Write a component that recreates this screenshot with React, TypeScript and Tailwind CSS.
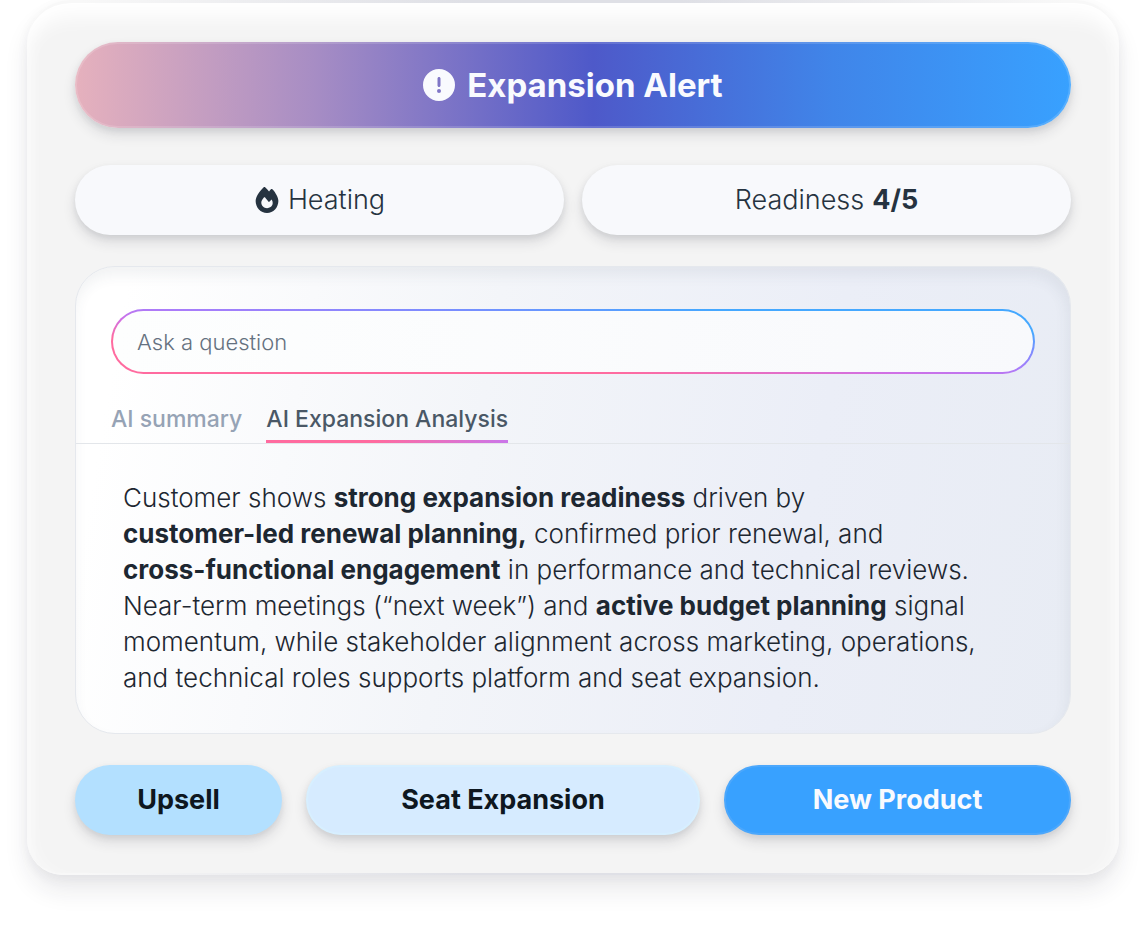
import { FaCircleExclamation, FaFire } from "react-icons/fa6";

const raised = "shadow-[0_7px_13px_rgba(30,35,50,0.12),0_3px_6px_rgba(30,35,50,0.08)]";

export default function App() {
  return (
    <main className="overflow-hidden bg-white px-[27px] pb-[54px] font-['Inter',sans-serif] text-[#263340]">
      <section className="rounded-b-[36px] rounded-t-[44px] border-b-2 border-t-[3px] border-transparent bg-[linear-gradient(#f4f4f4,#f4f4f4),linear-gradient(90deg,#f8f8f8_5%,#dfe0e6_40%,#dfe0e6_60%,#f8f8f8_95%)] px-12 pb-[38px] pt-[39px] shadow-[0_16px_24px_rgba(30,35,50,0.09),0_4px_12px_rgba(30,35,50,0.05),inset_0_18px_20px_-4px_#ffffff,inset_12px_0_18px_-8px_rgba(255,255,255,0.5),inset_-12px_0_18px_-8px_rgba(255,255,255,0.5)] [background-clip:padding-box,border-box] [background-origin:border-box]">
        <header
          className={`flex h-[86px] items-center justify-center gap-3 rounded-full border-2 border-white/15 bg-[linear-gradient(90deg,#e6b1bd_0%,#a78dc4_24%,#4e59c9_52%,#4085e9_76%,#38a1ff_100%)] bg-origin-border text-[#f9fafe] ${raised}`}
        >
          <FaCircleExclamation className="size-8" aria-hidden="true" />
          <h1 className="text-[33px] font-bold leading-10">Expansion Alert</h1>
        </header>

        <div className="mt-[37px] grid grid-cols-2 gap-[18px] text-[27px] leading-9">
          <div className={`flex h-[70px] items-center justify-center gap-2 rounded-full bg-[#f8f9fc] font-light ${raised}`}>
            <FaFire className="size-[26px]" aria-hidden="true" />
            <span>Heating</span>
          </div>
          <div className={`flex h-[70px] items-center justify-center gap-2 rounded-full bg-[#f8f9fc] font-light ${raised}`}>
            <span>Readiness</span>
            <strong className="font-bold">4/5</strong>
          </div>
        </div>

        <div className="mt-[31px] rounded-[40px] border border-[#e5e8ed] bg-[linear-gradient(100deg,#ffffff_5%,#f3f5f9_40%,#ebeef7_72%,#e8ecf4_100%)] pb-[37px] pt-[42px] shadow-[inset_-2px_8px_14px_rgba(50,65,85,0.07)]">
          <div className="px-[35px]">
            <input
              type="text"
              aria-label="Ask a question"
              placeholder="Ask a question"
              className="block h-[65px] w-full rounded-full border-2 border-transparent bg-[linear-gradient(90deg,#fdfefe,#f8f9fc),linear-gradient(4deg,#ff6b9f_28%,#cf70e6_43%,#a97cfa_53%,#7c8cff_67%,#45a8ff_82%)] px-6 text-[22px] font-light text-[#263340] outline-none [background-clip:padding-box,border-box] [background-origin:border-box] placeholder:text-[#657180] placeholder:opacity-100"
            />
          </div>

          <div role="tablist" className="mt-[26px] flex gap-6 border-b border-[#e3e6ea] px-[35px] text-[23px] font-medium leading-[38px]">
            <button type="button" role="tab" aria-selected="false" className="border-b-[3px] border-transparent pb-0.5 text-[#96a3b5]">
              AI summary
            </button>
            <button
              type="button"
              role="tab"
              aria-selected="true"
              className="border-b-[3px] pb-0.5 text-[#4a5866] [border-image:linear-gradient(90deg,#ff6b9f_45%,#ca76ea)_1]"
            >
              AI Expansion Analysis
            </button>
          </div>

          <p role="tabpanel" className="px-[47px] pt-9 text-[26px] font-light leading-9 text-[#1d2731] [&>strong]:font-bold">
            Customer shows <strong>strong expansion readiness</strong> driven by
            <br />
            <strong>customer-led renewal planning,</strong> confirmed prior renewal, and
            <br />
            <strong>cross-functional engagement</strong> in performance and technical reviews.
            <br />
            Near-term meetings (“next week”) and <strong>active budget planning</strong> signal
            <br />
            momentum, while stakeholder alignment across marketing, operations,
            <br />
            and technical roles supports platform and seat expansion.
          </p>
        </div>

        <div className="mt-[31px] grid grid-cols-[207fr_394fr_347fr] gap-6 text-[27px] font-bold leading-9">
          <button type="button" className={`h-[70px] rounded-full bg-[#b3e0ff] text-[#0e1720] ${raised}`}>
            Upsell
          </button>
          <button type="button" className={`h-[70px] rounded-full border-2 border-[#d7efff] bg-[#d6ebff] text-[#0e1720] ${raised}`}>
            Seat Expansion
          </button>
          <button type="button" className={`h-[70px] rounded-full border-2 border-[#4ba7fc] bg-[#38a1ff] text-[#f9fafe] ${raised}`}>
            New Product
          </button>
        </div>
      </section>
    </main>
  );
}
